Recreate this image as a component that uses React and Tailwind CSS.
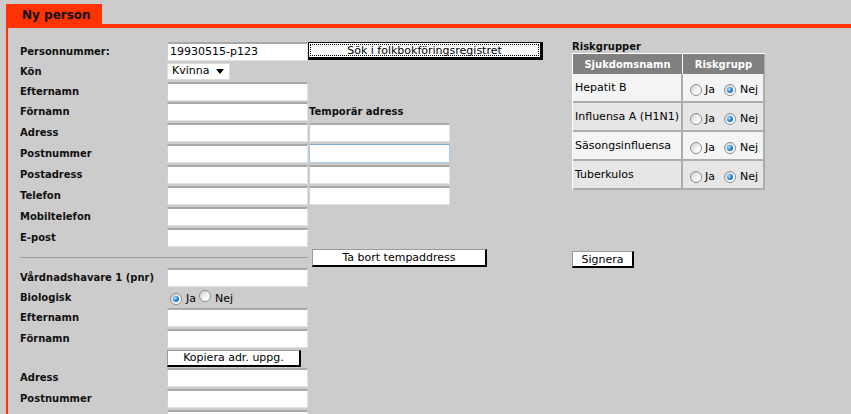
import React from "react";

const font = { fontFamily: '"DejaVu Sans", Verdana, sans-serif' };

const Radio = ({ checked }) => (
  <span className="inline-flex items-center justify-center w-[12px] h-[12px] rounded-full border border-[#8e8e8e] bg-[linear-gradient(135deg,#cfcfcf,#ffffff_75%)] shrink-0">
    {checked && (
      <span className="w-[6px] h-[6px] rounded-full bg-[radial-gradient(circle_at_35%_35%,#b4e4ff,#1c7fd0_55%,#0b4d8c)]" />
    )}
  </span>
);

const Field = ({ value = "", focus, className = "" }) => (
  <input
    readOnly
    defaultValue={value}
    className={`h-[19px] w-[141px] bg-white px-[2px] text-[11px] text-black outline-none border ${
      focus
        ? "border-[#a9cbe8] border-t-[#7fa9d2]"
        : "border-[#e2e2e2] border-t-[#a8a8a8] border-t-2 border-l-[#cfcfcf]"
    } ${className}`}
  />
);

const Row = ({ label, h = "h-[21px]", children }) => (
  <div className={`flex items-center ${h}`}>
    <div className="w-[147px] shrink-0 text-[10px] font-bold text-[#111]">{label}</div>
    {children}
  </div>
);

const Btn = ({ children, className = "" }) => (
  <button
    className={`bg-white text-[11px] text-black leading-none border-t border-l border-[#9a9a9a] border-r-2 border-b-2 border-r-black border-b-black ${className}`}
  >
    {children}
  </button>
);

const risks = ["Hepatit B", "Influensa A (H1N1)", "Säsongsinfluensa", "Tuberkulos"];

export default function App() {
  return (
    <div style={font} className="h-[414px] w-full bg-[#cccccc] overflow-hidden">
      <div className="pt-[4px] flex items-end">
        <div className="ml-[6px] w-[96px] h-[24px] bg-[#ff3300] flex items-center pl-[16px] pb-[2px] text-[12px] font-bold text-[#111]">
          Ny person
        </div>
        <div className="flex-1 h-[4px] bg-[#ff3300]" />
      </div>

      <div className="ml-[6px] h-[386px] border-l-2 border-[#ff3300] pl-[12px] pt-[13px] flex items-start">
        {/* left form */}
        <div className="w-[552px] shrink-0 flex flex-col">
          <Row label="Personnummer:" h="h-[20px]">
            <Field value="19930515-p123" />
            <button className="ml-0 w-[235px] h-[18px] bg-white border border-black border-r-[3px] border-b-[3px] p-[1px] text-[11px] text-black leading-none">
              <span className="flex items-center justify-center w-full h-full border border-dotted border-black">
                Sök i folkbokföringsregistret
              </span>
            </button>
          </Row>
          <Row label="Kön" h="h-[20px]">
            <div className="w-[63px] h-[17px] bg-white border border-[#dcdcdc] flex items-center justify-between pl-[4px] pr-[5px] text-[11px] text-black">
              Kvinna
              <svg width="8" height="5" viewBox="0 0 8 5">
                <polygon points="0,0 8,0 4,5" fill="#000" />
              </svg>
            </div>
          </Row>
          <Row label="Efternamn" h="h-[20px]">
            <Field />
          </Row>
          <Row label="Förnamn">
            <Field />
            <div className="ml-[1px] text-[10px] font-bold text-[#111]">Temporär adress</div>
          </Row>
          <Row label="Adress">
            <Field />
            <Field className="ml-[1px]" />
          </Row>
          <Row label="Postnummer">
            <Field />
            <Field className="ml-[1px]" focus />
          </Row>
          <Row label="Postadress">
            <Field />
            <Field className="ml-[1px]" />
          </Row>
          <Row label="Telefon">
            <Field />
            <Field className="ml-[1px]" />
          </Row>
          <Row label="Mobiltelefon">
            <Field />
          </Row>
          <Row label="E-post">
            <Field />
          </Row>

          <div className="flex items-center h-[19px]">
            <div className="w-[288px] border-t border-[#9c9c9c]" />
            <Btn className="ml-[4px] w-[175px] h-[18px]">Ta bort tempaddress</Btn>
          </div>

          <Row label="Vårdnadshavare 1 (pnr)">
            <Field />
          </Row>
          <Row label="Biologisk" h="h-[19px]">
            <div className="flex items-center pt-[3px] pl-[3px] text-[11px] text-black">
              <Radio checked />
              <span className="ml-[4px]">Ja</span>
              <span className="ml-[3px]"><Radio /></span>
              <span className="ml-[4px]">Nej</span>
            </div>
          </Row>
          <Row label="Efternamn">
            <Field />
          </Row>
          <Row label="Förnamn">
            <Field />
          </Row>
          <div className="flex items-center h-[18px] pl-[147px]">
            <Btn className="w-[134px] h-[17px]">Kopiera adr. uppg.</Btn>
          </div>
          <Row label="Adress">
            <Field />
          </Row>
          <Row label="Postnummer">
            <Field />
          </Row>
          <div className="flex pt-[1px] pl-[147px]">
            <Field />
          </div>
        </div>

        {/* right panel */}
        <div className="flex flex-col">
          <div className="h-[12px] leading-[12px] text-[10px] font-bold text-[#111]">Riskgrupper</div>
          <div className="w-[193px] border-t border-l border-white">
            <div className="flex h-[20px] bg-[#808080] text-[10px] font-bold text-white">
              <div className="w-[110px] flex items-center justify-center border-r border-white">Sjukdomsnamn</div>
              <div className="flex-1 flex items-center justify-center border-r border-[#a8a8a8]">Riskgrupp</div>
            </div>
            {risks.map((r, i) => (
              <div
                key={r}
                className={`flex h-[29px] border-b-2 border-[#adadad] text-[11px] text-black ${
                  i % 2 === 0 ? "bg-[#f4f4f4]" : "bg-[#e6e6e6]"
                }`}
              >
                <div className="w-[110px] flex items-center pl-[2px] pt-[2px] border-r-2 border-[#adadad]">{r}</div>
                <div className="flex-1 flex items-center pl-[7px] pt-[5px] border-r-2 border-[#adadad]">
                  <Radio />
                  <span className="ml-[3px]">Ja</span>
                  <span className="ml-[9px]"><Radio checked /></span>
                  <span className="ml-[4px]">Nej</span>
                </div>
              </div>
            ))}
          </div>
          <Btn className="mt-[61px] w-[62px] h-[17px]">Signera</Btn>
        </div>
      </div>
    </div>
  );
}
